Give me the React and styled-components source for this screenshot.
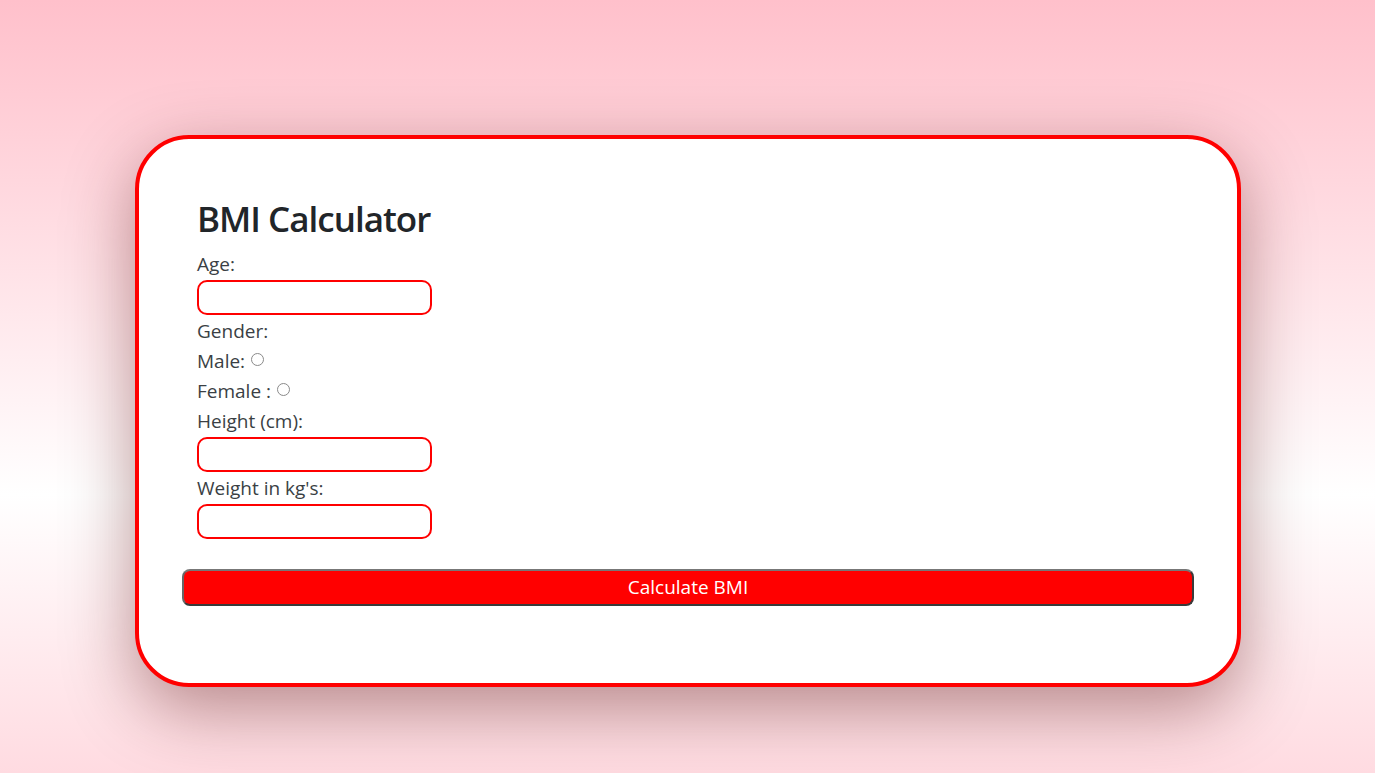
import React from "react";
import styled, { createGlobalStyle } from "styled-components";

const Global = createGlobalStyle`
  html, body { margin: 0; padding: 0; }
  body {
    min-height: 773px;
    font-family: "Open Sans", "Noto Sans", sans-serif;
    background: linear-gradient(180deg, #ffc0cb 0%, #ffffff 64%, #ffdbe1 100%);
    color: #212529;
  }
`;

const Page = styled.div`
  min-height: 773px;
  box-sizing: border-box;
  padding: 135px 134px 0 135px;
`;

const Card = styled.div`
  box-sizing: border-box;
  height: 552px;
  border: 4px solid #ff0000;
  border-radius: 54px;
  background: #fff;
  box-shadow: 0 22px 70px rgba(80, 0, 0, 0.42);
  padding: 58px 43px 0 43px;
`;

const Form = styled.form`
  display: flex;
  flex-direction: column;
`;

const Fields = styled.div`
  display: flex;
  flex-direction: column;
  align-items: flex-start;
  padding-left: 15px;
`;

const Title = styled.h2`
  margin: 0 0 11px 0;
  font-size: 35px;
  font-weight: 600;
  line-height: 43px;
  color: #212529;
  letter-spacing: -1px;
`;

const Label = styled.label`
  font-size: 19px;
  line-height: 26px;
  color: #3a3f44;
  margin-top: ${(p) => p.$gap || 0}px;
  display: flex;
  align-items: center;
`;

const Input = styled.input`
  box-sizing: border-box;
  width: 235px;
  height: 35px;
  margin-top: 3px;
  border: 2px solid #ff0000;
  border-radius: 10px;
  outline: none;
  background: #fff;
`;

const Radio = styled.input`
  appearance: none;
  box-sizing: border-box;
  width: 13px;
  height: 13px;
  margin: 0 0 4px 6px;
  border: 1px solid #8a8a8a;
  border-radius: 50%;
  background: #fff;
  &:checked {
    border: 4px solid #0075ff;
  }
`;

const Button = styled.button`
  margin-top: 30px;
  height: 37px;
  width: 100%;
  border: 2px solid #3a3a3a;
  border-top-color: #777;
  border-left-color: #666;
  border-radius: 8px;
  background: #ff0000;
  color: #fff;
  font-family: "Open Sans", "Noto Sans", sans-serif;
  font-size: 19px;
  line-height: 1;
`;

export default function App() {
  return (
    <>
      <Global />
      <Page>
        <Card>
          <Form onSubmit={(e) => e.preventDefault()}>
            <Fields>
              <Title>BMI Calculator</Title>
              <Label>Age:</Label>
              <Input type="number" />
              <Label $gap={3}>Gender:</Label>
              <Label $gap={4}>
                Male: <Radio type="radio" name="gender" />
              </Label>
              <Label $gap={4}>
                Female : <Radio type="radio" name="gender" />
              </Label>
              <Label $gap={4}>Height (cm):</Label>
              <Input type="number" />
              <Label $gap={3}>Weight in kg's:</Label>
              <Input type="number" />
            </Fields>
            <Button type="submit">Calculate BMI</Button>
          </Form>
        </Card>
      </Page>
    </>
  );
}
